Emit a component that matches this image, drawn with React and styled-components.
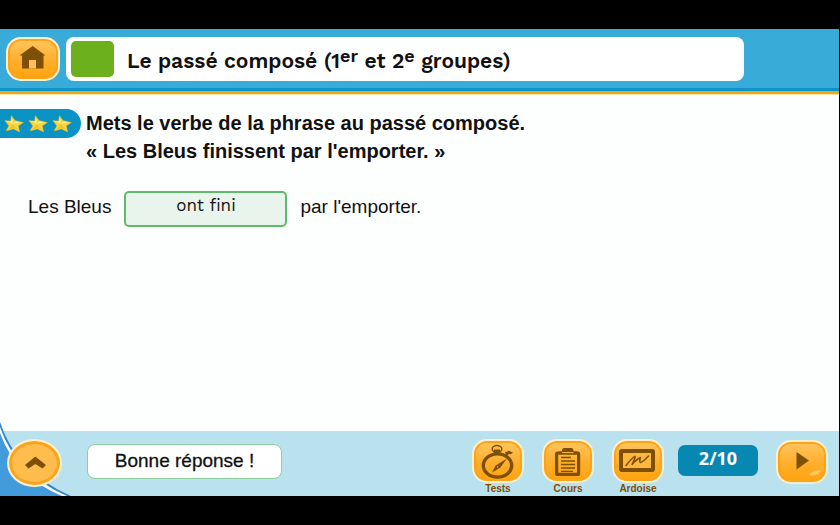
import React, { useState } from "react";
import styled, { createGlobalStyle, css } from "styled-components";

const color = {
  sky: "#38abd8",
  skyDark: "#0a93c4",
  gold: "#e9a820",
  pale: "#b9e2ee",
  brown: "#7d5005",
  green: "#6cb01e",
  leaf: "#5fba6c",
  mint: "#e9f4ec",
  pill: "#0788b3"
};

const GlobalStyle = createGlobalStyle`
  *, *::before, *::after {
    box-sizing: border-box;
  }
  body {
    margin: 0;
    background-color: #000;
    color: #111;
    font-family: "Liberation Sans", Arial, sans-serif;
  }
`;

const Screen = styled.div`
  display: flex;
  flex-direction: column;
  min-height: 100vh;
  padding: 29px 1px 29px 0;
  background-color: #000;
`;

const Header = styled.header`
  display: flex;
  align-items: center;
  gap: 6px;
  padding: 8px 95px 7px 6px;
  background-color: ${color.sky};
  border-bottom: 3px solid ${color.skyDark};
`;

const TitleBar = styled.div`
  display: flex;
  flex: 1;
  align-items: center;
  gap: 13px;
  height: 44px;
  padding: 0 5px;
  border-radius: 8px;
  background-color: #fff;
`;

const LevelBadge = styled.span`
  width: 43px;
  height: 36px;
  border-radius: 5px;
  background-color: ${color.green};
`;

const Title = styled.h1`
  margin: 0;
  padding-top: 4px;
  font-family: "Work Sans", "Open Sans", sans-serif;
  font-size: 21px;
  font-weight: 600;
  line-height: 24px;
  white-space: nowrap;

  sup {
    font-size: 18px;
    line-height: 0;
    vertical-align: 6px;
  }
`;

const Face = styled.span`
  display: block;
  width: ${props => (props.$wide ? "54px" : "52px")};
  height: 44px;
  border: 2px solid #fdf0d0;
  border-radius: 15px;
  background: linear-gradient(#ffc65f, #ffae2c 55%, #ffa30f);
  box-shadow: inset 0 0 0 2px #fba31a;

  ${props =>
    props.$round &&
    css`
      width: 55px;
      height: 48px;
      border-radius: 50%;
      background: #ffbd4e;
      box-shadow: inset 0 0 0 3px #fba31a;
    `}

  svg {
    display: block;
    margin: -2px;
  }
`;

const IconButton = styled.button`
  display: flex;
  flex-direction: column;
  align-items: center;
  padding: 0;
  border: 0;
  background: none;
  color: ${color.brown};
  font-family: inherit;
  font-size: 10px;
  font-weight: 700;
  line-height: 12px;
  cursor: pointer;
`;

const Main = styled.main`
  flex: 1;
  padding-top: 15px;
  border-top: 3px solid ${color.gold};
  background-color: #fdfefe;
  box-shadow: inset 0 1px 0 #fbe6a8;
`;

const Exercise = styled.section`
  display: flex;
  align-items: flex-start;
  gap: 5px;
`;

const Stars = styled.div`
  display: flex;
  align-items: center;
  gap: 4px;
  width: 81px;
  height: 29px;
  padding-left: 4px;
  border-radius: 0 15px 15px 0;
  background-color: ${color.skyDark};
`;

const Instruction = styled.p`
  margin: 0;
  font-size: 20px;
  font-weight: 700;
  line-height: 28px;
`;

const Sentence = styled.form`
  display: flex;
  align-items: flex-start;
  gap: 13px;
  padding: 26px 28px;
  font-size: 19px;
  line-height: 32px;
`;

const Answer = styled.input`
  width: 163px;
  height: 36px;
  padding: 0 0 8px;
  border: 2px solid ${color.leaf};
  border-radius: 5px;
  background-color: ${color.mint};
  color: inherit;
  font-family: "Work Sans", "Open Sans", sans-serif;
  font-size: 17px;
  text-align: center;
`;

const Footer = styled.footer`
  position: relative;
  display: flex;
  align-items: flex-start;
  gap: 18px;
  height: 65px;
  padding: 8px 11px 0 7px;
  background-color: ${color.pale};

  ${IconButton} {
    position: relative;
  }
`;

const Corner = styled.svg`
  position: absolute;
  bottom: 0;
  left: 0;
`;

const Feedback = styled.output`
  margin: 5px auto 0 7px;
  width: 195px;
  padding-bottom: 2px;
  border: 1px solid #8fcf9f;
  border-radius: 8px;
  background-color: #fff;
  font-size: 19px;
  line-height: 31px;
  text-align: center;
  -webkit-text-stroke: 0.3px;
`;

const Progress = styled.span`
  width: 80px;
  height: 31px;
  margin: 6px 0 0 -4px;
  border-radius: 7px;
  background-color: ${color.pill};
  color: #fff;
  font-family: "Open Sans", sans-serif;
  font-size: 18px;
  font-weight: 700;
  line-height: 26px;
  text-align: center;
`;

const NextButton = styled(IconButton)`
  margin-top: 1px;
`;

const Star = () => (
  <svg width="20" height="18" viewBox="0 0 20 18" aria-hidden="true">
    <path
      d="M7.4 .6 11 5.4 19.6 7.4 14.4 10.8 15.6 17 9.4 14 2 16 4.8 10.8.8 5.6 6.6 6Z"
      fill="#f8d63c"
      stroke="#e3b52c"
      strokeWidth=".4"
      strokeLinejoin="round"
    />
    <path d="M7.6 2.4 9 8.6 2.4 6.4 7 6.6Z M9 8.6 17 7.6 11 6.6Z" fill="#fdf08c" />
    <path d="M9 9.4 14.6 15.6 9.6 13.2 3.6 15.2Z" fill="#f3c42f" />
  </svg>
);

const HomeIcon = () => (
  <svg width="54" height="44" viewBox="0 0 54 44" aria-hidden="true">
    <path
      d="M26.7 9 39.5 18.5H37.5V31.5H16V18.5H13.5Z"
      fill={color.brown}
    />
    <path d="M23 23H30V31.5H23Z" fill="#ffc05a" />
  </svg>
);

const StopwatchIcon = () => (
  <svg width="52" height="44" viewBox="0 0 52 44" aria-hidden="true">
    <ellipse cx="25.5" cy="26.5" rx="14.2" ry="11.6" fill="none" stroke={color.brown} strokeWidth="3.4" />
    <ellipse cx="25" cy="10" rx="4.8" ry="3.4" fill="none" stroke={color.brown} strokeWidth="1.5" />
    <path d="M22 10.5H28V15H22Z M33 13 36 12.5 35.6 11.4 41 13.5 38.5 15.5 37 14.8 34.5 17.5Z" fill={color.brown} />
    <path d="M35 19.6 28.2 28.8 20 33.4 23.6 26.5Z" fill={color.brown} />
    <circle cx="25.6" cy="28" r=".7" fill="#ffb535" />
  </svg>
);

const ClipboardIcon = () => (
  <svg width="52" height="44" viewBox="0 0 52 44" aria-hidden="true">
    <rect x="14.6" y="14" width="22" height="21.4" rx="1" fill="none" stroke={color.brown} strokeWidth="3.2" />
    <path d="M17 12.5H20V11Q20 9 22.5 9H29Q31.5 9 31.5 11V12.5H35V15.5H17Z" fill={color.brown} />
    <path d="M20 13.6H31.5" stroke="#ffc05a" />
    <path
      d="M19 18.5H29 M19 22H33 M19 25.5H33 M19 29H33 M19 32.4H31"
      stroke={color.brown}
      strokeWidth="1.4"
    />
  </svg>
);

const SlateIcon = () => (
  <svg width="52" height="44" viewBox="0 0 52 44" aria-hidden="true">
    <rect x="9" y="12" width="32" height="19" rx="1" fill="#ffb73b" stroke={color.brown} strokeWidth="4" strokeLinejoin="round" />
    <path
      d="M14 26.5Q18 21 22.5 17.5 24.5 17 20 25.5 25 20 28.5 18.5 27 23 28.5 23.5 31 23 36.5 17"
      fill="none"
      stroke={color.brown}
      strokeWidth="1.5"
      strokeLinecap="round"
      strokeLinejoin="round"
    />
  </svg>
);

const NextIcon = () => (
  <svg width="52" height="44" viewBox="0 0 52 44" aria-hidden="true">
    <path d="M33 35Q35 31 45 30 43 37 33 35Z" fill="#ffc765" />
    <path d="M20.5 12 33 20.5 20.5 29.5Z" fill={color.brown} />
  </svg>
);

const ChevronIcon = () => (
  <svg width="55" height="48" viewBox="0 0 55 48" aria-hidden="true">
    <path d="M28.3 17.5 39 26 35.5 29.6 28.3 25 21.5 29.6 18 26Z" fill={color.brown} />
  </svg>
);

const tools = [
  { label: "Tests", icon: StopwatchIcon },
  { label: "Cours", icon: ClipboardIcon },
  { label: "Ardoise", icon: SlateIcon }
];

const App = () => {
  const [answer, setAnswer] = useState("ont fini");

  return (
    <Screen>
      <GlobalStyle />
      <Header>
        <IconButton type="button" aria-label="Accueil">
          <Face $wide>
            <HomeIcon />
          </Face>
        </IconButton>
        <TitleBar>
          <LevelBadge />
          <Title>
            Le passé composé (1<sup>er</sup> et 2<sup>e</sup> groupes)
          </Title>
        </TitleBar>
      </Header>
      <Main>
        <Exercise>
          <Stars>
            <Star />
            <Star />
            <Star />
          </Stars>
          <Instruction>
            Mets le verbe de la phrase au passé composé.
            <br />« Les Bleus finissent par l'emporter. »
          </Instruction>
        </Exercise>
        <Sentence onSubmit={e => e.preventDefault()}>
          <label htmlFor="answer">Les Bleus</label>
          <Answer
            id="answer"
            value={answer}
            autoComplete="off"
            spellCheck={false}
            onChange={e => setAnswer(e.target.value)}
          />
          <span>par l'emporter.</span>
        </Sentence>
      </Main>
      <Footer>
        <Corner width="72" height="76" viewBox="0 0 72 76" aria-hidden="true">
          <path d="M0 2Q16 52 71 76H0Z" fill="#2c86cb" />
          <path d="M0 7Q16 54 67 76H0Z" fill="#fff" />
          <path d="M0 13Q16 57 62 76H0Z" fill="#429bdb" />
        </Corner>
        <IconButton type="button" aria-label="Menu">
          <Face $round>
            <ChevronIcon />
          </Face>
        </IconButton>
        <Feedback htmlFor="answer">Bonne réponse !</Feedback>
        {tools.map(({ label, icon: Icon }) => (
          <IconButton type="button" key={label}>
            <Face>
              <Icon />
            </Face>
            {label}
          </IconButton>
        ))}
        <Progress>2/10</Progress>
        <NextButton type="button" aria-label="Suivant">
          <Face>
            <NextIcon />
          </Face>
        </NextButton>
      </Footer>
    </Screen>
  );
};

export default App;
